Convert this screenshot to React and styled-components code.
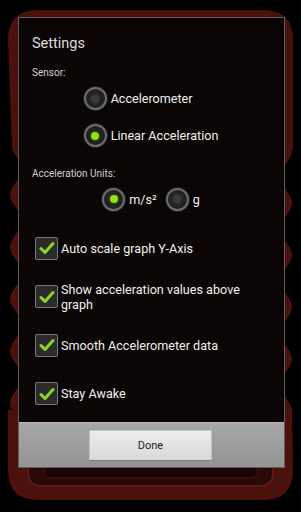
import React from "react";
import styled, { createGlobalStyle } from "styled-components";

const GlobalStyle = createGlobalStyle`
  html, body {
    margin: 0;
    padding: 0;
    background: #000;
  }
  body {
    font-family: Roboto, "Liberation Sans", sans-serif;
  }
`;

const Screen = styled.div`
  position: relative;
  display: flex;
  width: 301px;
  height: 512px;
  box-sizing: border-box;
  padding: 17px 16px 44px 18px;
  background: #000;
  overflow: hidden;
`;

const Backdrop = styled.svg`
  position: absolute;
  inset: 0;
`;

const Dialog = styled.div`
  position: relative;
  display: flex;
  flex-flow: column nowrap;
  flex: 1;
  border: 1px solid #5e5e5e;
  background: #0b0505;
`;

const Body = styled.div`
  display: flex;
  flex-flow: column nowrap;
  flex: 1;
  padding: 16px 14px 0 13px;
  color: #e6e6e6;
`;

const Title = styled.div`
  height: 20px;
  line-height: 20px;
  font-size: 14.5px;
  color: #dcdcdc;
`;

const Label = styled.div`
  margin-top: ${({ gap }) => gap}px;
  height: 14px;
  line-height: 14px;
  font-size: 10px;
  color: #cfcfcf;
`;

const RadioColumn = styled.div`
  display: flex;
  flex-flow: column nowrap;
  align-self: center;
`;

const RadioRow = styled.div`
  display: flex;
  flex-flow: row nowrap;
  align-self: center;
  gap: 9px;
`;

const Option = styled.div`
  display: flex;
  align-items: center;
  gap: 4px;
  height: ${({ tall }) => tall}px;
  font-size: 12.6px;
  color: #efefef;
`;

const Radio = styled.span`
  display: flex;
  align-items: center;
  justify-content: center;
  width: 19px;
  height: 19px;
  border-radius: 50%;
  border: 2px solid #6c6c6c;
  background: radial-gradient(circle, #2a2a2a 0%, #1c1c1c 100%);
  box-shadow: 0 0 0 1px #222;
`;

const Dot = styled.span`
  width: 8px;
  height: 8px;
  border-radius: 50%;
  background: ${({ on }) => (on ? "#8ee31c" : "#3b3b3b")};
  box-shadow: 0 0 0 1.5px ${({ on }) => (on ? "#2b3a12" : "#2a2a2a")};
`;

const Checks = styled.div`
  display: flex;
  flex-flow: column nowrap;
  margin-top: 7px;
`;

const CheckRow = styled.div`
  display: flex;
  align-items: center;
  gap: 3px;
  height: 48.5px;
  padding-left: 3px;
  font-size: 12.6px;
  line-height: 15px;
  color: #efefef;
`;

const Box = styled.span`
  display: flex;
  align-items: center;
  justify-content: center;
  flex: none;
  width: 21px;
  height: 21px;
  border: 1.5px solid #777;
  border-radius: 2px;
  background: #2b2b2b;
`;

const ButtonBar = styled.div`
  display: flex;
  align-items: center;
  justify-content: center;
  height: 44px;
  border-top: 1px solid #b4b4b4;
  background: linear-gradient(#a6a6a6, #949494);
`;

const Button = styled.div`
  display: flex;
  align-items: center;
  justify-content: center;
  width: 121px;
  height: 29px;
  margin-right: 2px;
  border: 1px solid #c2c2c2;
  border-bottom-color: #7a7a7a;
  border-radius: 1px;
  background: linear-gradient(#ececec, #d9d9d9);
  font-size: 11px;
  color: #222;
`;

function framePath() {
  let d = "M8 40 Q8 10 38 10 L263 10 Q293 10 293 40 L293 150";
  for (let y = 150; y <= 410; y += 2) {
    const x = 286 + 6 * Math.cos((2 * Math.PI * (y - 203)) / 52);
    d += ` L${x.toFixed(1)} ${y}`;
  }
  d += " L293 470 Q293 500 263 500 L38 500 Q8 500 8 470 L8 410";
  for (let y = 410; y >= 150; y -= 2) {
    const x = 16 - 6 * Math.cos((2 * Math.PI * (y - 195)) / 52);
    d += ` L${x.toFixed(1)} ${y}`;
  }
  return d + " Z";
}

function Device() {
  return (
    <Backdrop width="301" height="512" viewBox="0 0 301 512">
      <path d={framePath()} fill="#4a110d" />
      <rect x="28" y="420" width="245" height="66" rx="12" fill="#2a0a08" stroke="#5c1a14" strokeWidth="2" />
      <rect x="44" y="420" width="213" height="58" rx="6" fill="#170605" stroke="#3c0f0b" strokeWidth="1.5" />
    </Backdrop>
  );
}

function Check() {
  return (
    <svg width="16" height="14" viewBox="0 0 16 14">
      <path d="M2 7.5 L6 11.5 L14 2.5" fill="none" stroke="#8bd425" strokeWidth="3" strokeLinecap="round" strokeLinejoin="round" />
    </svg>
  );
}

function RadioOption({ on, tall = 37, children }) {
  return (
    <Option tall={tall}>
      <Radio>
        <Dot on={on} />
      </Radio>
      {children}
    </Option>
  );
}

const options = [
  "Auto scale graph Y-Axis",
  "Show acceleration values above graph",
  "Smooth Accelerometer data",
  "Stay Awake",
];

export default function App() {
  return (
    <>
      <GlobalStyle />
      <Screen>
        <Device />
        <Dialog>
          <Body>
            <Title>Settings</Title>
            <Label gap={12}>Sensor:</Label>
            <RadioColumn>
              <RadioOption>Accelerometer</RadioOption>
              <RadioOption on>Linear Acceleration</RadioOption>
            </RadioColumn>
            <Label gap={13}>Acceleration Units:</Label>
            <RadioRow>
              <RadioOption on tall={36}>m/s²</RadioOption>
              <RadioOption tall={36}>g</RadioOption>
            </RadioRow>
            <Checks>
              {options.map((text) => (
                <CheckRow key={text}>
                  <Box>
                    <Check />
                  </Box>
                  <span>{text}</span>
                </CheckRow>
              ))}
            </Checks>
          </Body>
          <ButtonBar>
            <Button>Done</Button>
          </ButtonBar>
        </Dialog>
      </Screen>
    </>
  );
}
